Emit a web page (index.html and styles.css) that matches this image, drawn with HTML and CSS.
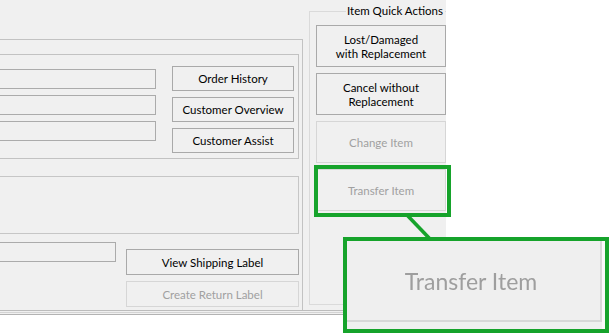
FILE: index.html
```html
<!DOCTYPE html>
<html lang="en">
<head>
<meta charset="utf-8">
<title>Item Quick Actions</title>
<link rel="stylesheet" href="styles.css">
</head>
<body>
<div class="stage">
  <div class="panel">
    <div class="content">
      <div class="main-group">
        <div class="inner-group">
          <div class="fields">
            <div class="field"></div>
            <div class="field"></div>
            <div class="field"></div>
          </div>
          <div class="btn-col">
            <button class="btn btn-std">Order History</button>
            <button class="btn btn-std">Customer Overview</button>
            <button class="btn btn-std">Customer Assist</button>
          </div>
        </div>
        <div class="notes-box"></div>
        <div class="ship-row">
          <div class="field field-short"></div>
          <div class="ship-btns">
            <button class="btn btn-wide">View Shipping Label</button>
            <button class="btn btn-wide is-disabled">Create Return Label</button>
          </div>
        </div>
      </div>
      <div class="qa-group">
        <div class="qa-legend">
          <span class="seg seg-left"></span>
          <span class="qa-title">Item Quick Actions</span>
          <span class="seg seg-right"></span>
        </div>
        <div class="qa-body">
          <button class="btn btn-qa">Lost/Damaged<br>with Replacement</button>
          <button class="btn btn-qa">Cancel without<br>Replacement</button>
          <button class="btn btn-qa is-disabled">Change Item</button>
          <button class="btn btn-qa is-disabled">Transfer Item</button>
        </div>
      </div>
    </div>
    <div class="edge"></div>
  </div>

  <div class="highlight"></div>
  <svg class="connector" width="609" height="333" viewBox="0 0 609 333">
    <line x1="407" y1="215" x2="430" y2="239" stroke="#16a32b" stroke-width="3.6"/>
  </svg>
  <div class="magnifier">
    <div class="mag-view">
      <div class="mag-btn"><span class="mag-text">Transfer Item</span></div>
    </div>
  </div>
</div>
</body>
</html>
```

FILE: styles.css
```css
* {
  box-sizing: border-box;
}

html, body {
  margin: 0;
  padding: 0;
  background: #ffffff;
}

body {
  font-family: "Segoe UI", Lato, "Noto Sans", sans-serif;
  font-size: 11.5px;
  color: #000000;
}

.stage {
  position: relative;
  width: 609px;
  height: 333px;
  overflow: hidden;
  background: #ffffff;
}

.panel {
  width: 446px;
  height: 315px;
  background: #f0f0f0;
  overflow: hidden;
}

.content {
  display: flex;
  height: 310px;
}

.edge {
  height: 5px;
  border-top: 1px solid #bcbcbc;
  border-bottom: 1px solid #b3b3b3;
  background: linear-gradient(to bottom, #f0f0f0 0 1px, #d4d4d4 1px 2px, #f0f0f0 2px 3px);
}

/* left group */
.main-group {
  flex: none;
  width: 303px;
  height: 271px;
  margin-top: 39px;
  border-top: 1px solid #c2c2c2;
  border-right: 1px solid #c2c2c2;
}

.inner-group {
  display: flex;
  width: 299px;
  height: 105px;
  margin-top: 14px;
  border-top: 1px solid #c2c2c2;
  border-right: 1px solid #c2c2c2;
  border-bottom: 1px solid #c2c2c2;
}

.fields {
  display: flex;
  flex-direction: column;
  gap: 6px;
  width: 156px;
  padding-top: 14px;
}

.field {
  width: 156px;
  height: 20px;
  border: 1px solid #ababab;
  border-left: none;
  background: #f0f0f0;
}

.field-short {
  width: 116px;
  margin-top: 8px;
}

.btn-col {
  display: flex;
  flex-direction: column;
  gap: 6px;
  margin-left: 16px;
  padding-top: 11px;
}

.btn {
  display: flex;
  align-items: center;
  justify-content: center;
  margin: 0;
  padding: 1px 0 0;
  border: 1px solid #a9a9a9;
  background: #f0f0f0;
  color: #000000;
  font-family: inherit;
  font-size: 11.5px;
  line-height: 16px;
  text-align: center;
  white-space: nowrap;
}

.btn-std {
  width: 122px;
  height: 25px;
}

.notes-box {
  width: 299px;
  height: 58px;
  margin-top: 17px;
  border-top: 1px solid #c6c6c6;
  border-right: 1px solid #c6c6c6;
  border-bottom: 1px solid #c6c6c6;
}

.ship-row {
  display: flex;
}

.ship-btns {
  display: flex;
  flex-direction: column;
  gap: 6px;
  margin-left: 10px;
  padding-top: 15px;
}

.btn-wide {
  width: 173px;
  height: 26px;
}

.is-disabled {
  border-color: #d6d6d6;
  color: #a0a0a0;
}

/* quick actions group */
.qa-group {
  flex: none;
  width: 146px;
  margin-left: 6px;
  margin-top: 3px;
}

.qa-legend {
  display: flex;
  height: 16px;
}

.seg {
  height: 8px;
  margin-top: 8px;
  border-top: 1px solid #dadada;
}

.seg-left {
  flex: none;
  width: 37px;
  border-left: 1px solid #dadada;
}

.seg-right {
  flex: 1;
  border-right: 1px solid #dadada;
}

.qa-title {
  padding: 0 2px 0 1px;
  line-height: 16px;
  white-space: nowrap;
}

.qa-body {
  display: flex;
  flex-direction: column;
  gap: 6px;
  height: 286px;
  padding: 6px 0 0 6px;
  border-left: 1px solid #dadada;
  border-right: 1px solid #dadada;
  border-bottom: 1px solid #dadada;
}

.btn-qa {
  width: 130px;
  height: 42px;
  line-height: 14px;
}

/* annotation overlays */
.highlight {
  position: absolute;
  left: 314px;
  top: 165px;
  width: 137px;
  height: 52px;
  border: 4px solid #16a32b;
}

.connector {
  position: absolute;
  left: 0;
  top: 0;
  pointer-events: none;
}

.magnifier {
  position: absolute;
  left: 343px;
  top: 237px;
  width: 266px;
  height: 96px;
  border: 4px solid #16a32b;
  background: #f0f0f0;
}

.mag-view {
  width: 100%;
  height: 100%;
  background: linear-gradient(to right, #f0f0f0 255px, #f9f9f9 255px);
}

.mag-btn {
  display: flex;
  align-items: center;
  justify-content: center;
  width: 255px;
  height: 81px;
  padding-right: 5px;
  border-right: 2px solid #d8d8d8;
  border-bottom: 2px solid #d8d8d8;
  background: #efefef;
}

.mag-text {
  font-size: 23px;
  line-height: 24px;
  color: #9e9e9e;
  filter: blur(0.5px);
  white-space: nowrap;
}
```
